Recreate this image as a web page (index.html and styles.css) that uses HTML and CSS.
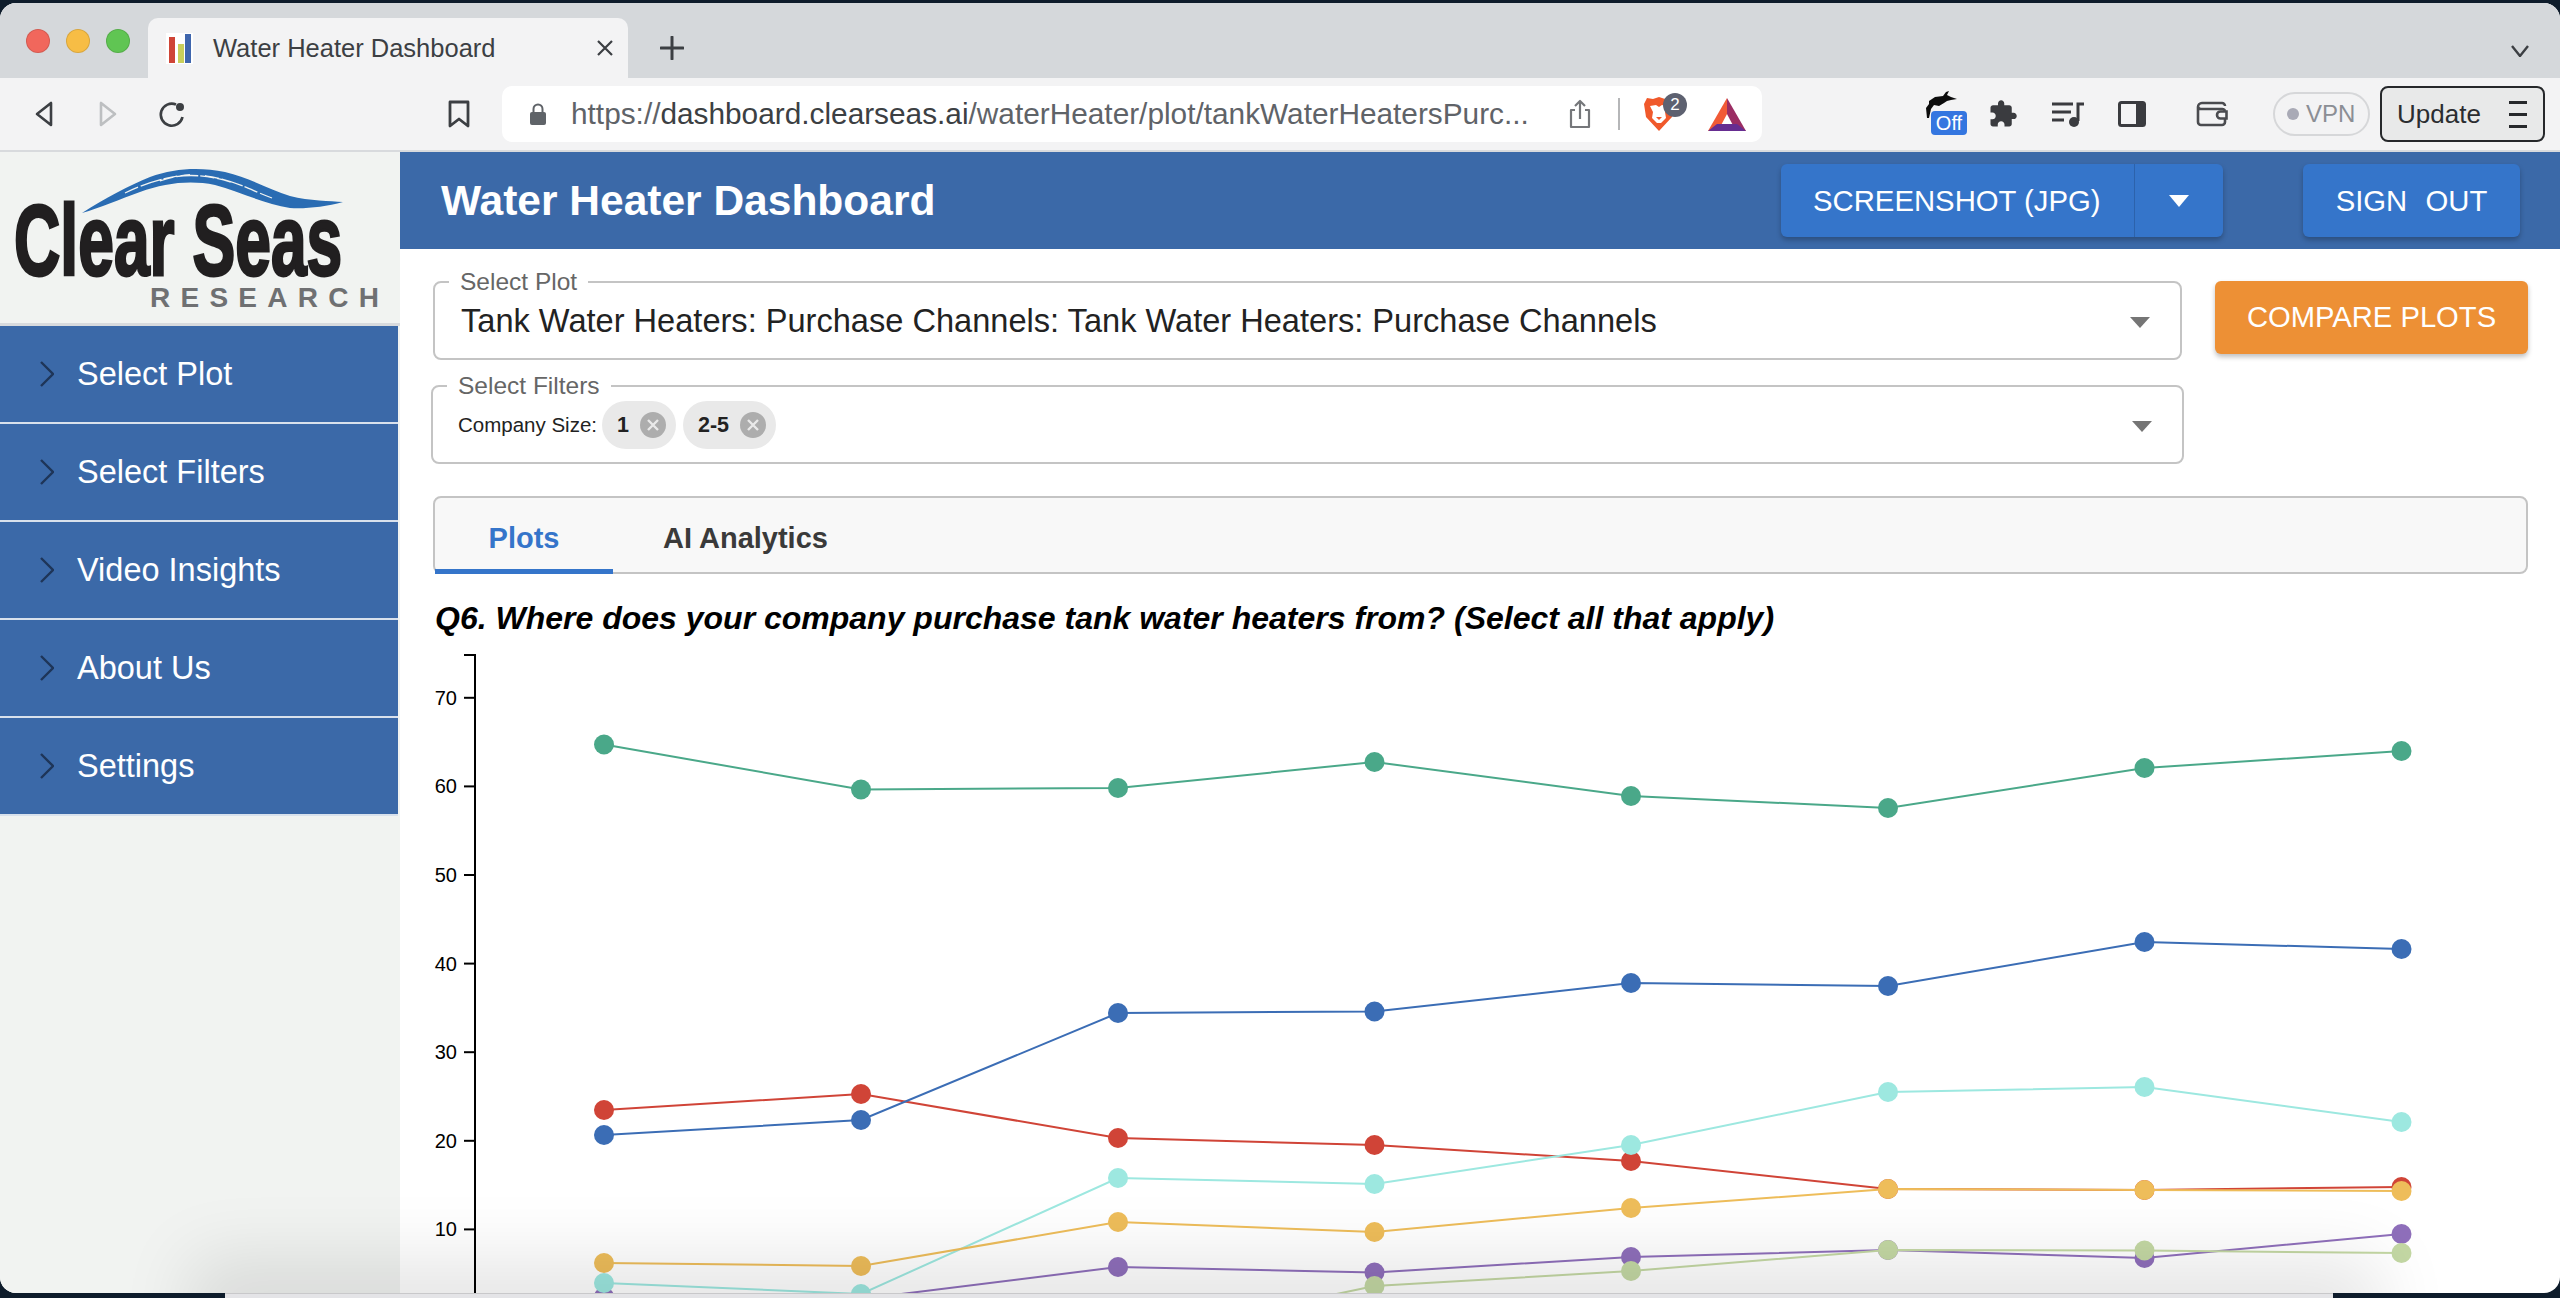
FILE: index.html
```html
<!DOCTYPE HTML>
<html>
<head>
<meta charset="utf-8">
<title>Water Heater Dashboard</title>
<link rel="stylesheet" href="styles.css">
</head>

<body>
<div class="window">
	<!-- browser tabs -->
	<div class="tabstrip">
		<div class="lights"><i class="red"></i><i class="yellow"></i><i class="green"></i></div>
		<div class="tab">
			<svg class="favicon" width="27" height="31" viewBox="0 0 27 31"><rect width="27" height="31" fill="#fff"/><rect x="3" y="4" width="6" height="26" fill="#cf4436"/><rect x="12" y="11" width="6" height="19" fill="#c9cf5a"/><rect x="19" y="1" width="6" height="29" fill="#3f66ad"/></svg>
			<span class="tab-title">Water Heater Dashboard</span>
			<svg class="tab-close" width="16" height="16" viewBox="0 0 16 16"><path d="M1 1l14 14M15 1L1 15" stroke="#3c3f43" stroke-width="2.2"/></svg>
		</div>
		<svg class="tab-plus" width="24" height="24" viewBox="0 0 24 24"><path d="M12 1v22M1 12h22" stroke="#3c3f43" stroke-width="3" stroke-linecap="round"/></svg>
		<svg class="tab-more" width="20" height="12" viewBox="0 0 20 12"><path d="M2 1l8 10 8-10" fill="none" stroke="#3c3f43" stroke-width="2.4"/></svg>
	</div>

	<!-- browser toolbar -->
	<div class="toolbar">
		<svg class="nav-back" width="20" height="26" viewBox="0 0 20 26"><path d="M17 2v22L3 13z" fill="none" stroke="#3c3f43" stroke-width="2.6" stroke-linejoin="round"/></svg>
		<svg class="nav-next" width="20" height="26" viewBox="0 0 20 26"><path d="M3 2v22l14-11z" fill="none" stroke="#bdbfc1" stroke-width="2.6" stroke-linejoin="round"/></svg>
		<svg class="nav-reload" width="28" height="28" viewBox="0 0 28 28"><path d="M18 4.500A11 11 0 1 0 24.500 17" fill="none" stroke="#3c3f43" stroke-width="2.6"/><circle cx="22" cy="7" r="4" fill="#3c3f43"/></svg>
		<svg class="nav-mark" width="22" height="28" viewBox="0 0 22 28"><path d="M2 2h18v24l-9-7-9 7z" fill="none" stroke="#3c3f43" stroke-width="2.8" stroke-linejoin="round"/></svg>
		<div class="urlbar">
			<svg class="lock" width="18" height="22" viewBox="0 0 18 22"><path d="M4.500 9V6a4.500 4.500 0 0 1 9 0v3" fill="none" stroke="#5f6368" stroke-width="2"/><rect x="1" y="9" width="16" height="13" rx="2" fill="#5f6368"/></svg>
			<span class="url">https://<b>dashboard.clearseas.ai</b>/waterHeater/plot/tankWaterHeatersPurc...</span>
			<svg class="share" width="22" height="30" viewBox="0 0 22 30"><path d="M6 11H2v17h18V11h-4M11 20V2M6 7l5-5 5 5" fill="none" stroke="#75777a" stroke-width="2.200" stroke-linejoin="round"/></svg>
			<i class="url-sep"></i>
			<div class="brave">
				<svg width="32" height="36" viewBox="0 0 32 36"><path d="M4 2l6 1 6-2 6 2 6-1 3 6-2 13-13 14L3 21 1 8z" fill="#f0592b"/><path d="M7 10l6-1 3 2 3-2 6 1-3 6 1 6-5 5h-4l-5-5 1-6z" fill="#fff"/><path d="M13 21h6l-3 3z" fill="#f0592b"/></svg>
				<span class="badge">2</span>
			</div>
			<svg class="bat" width="38" height="33" viewBox="0 0 38 33"><path d="M19 0L0 33h10l9-17z" fill="#f15a36"/><path d="M19 0l19 33H28l-9-17z" fill="#9b2d63"/><path d="M0 33l9-7h20l9 7z" fill="#662d91"/></svg>
		</div>
		<div class="ext-icons">
			<div class="ext-rabbit">
				<svg width="32" height="30" viewBox="0 0 32 30"><path d="M4 10l6-4 8-1 3-4 3-1-2 4 4 2 6 2-6 1-4 1-3 2-5 3-5-1-3 4-2 9H2l-1-10 3-4z" fill="#0c0c0c"/></svg>
				<span class="off">Off</span>
			</div>
			<svg width="30" height="30" viewBox="0 0 24 24"><path d="M20.500 11H19V7c0-1.100-.9-2-2-2h-4V3.500C13 2.120 11.880 1 10.500 1S8 2.120 8 3.500V5H4c-1.100 0-2 .9-2 2v3.800h1.500c1.490 0 2.700 1.210 2.700 2.700s-1.210 2.700-2.700 2.700H2V20c0 1.100.9 2 2 2h3.800v-1.500c0-1.490 1.210-2.700 2.700-2.700s2.700 1.210 2.700 2.700V22H17c1.100 0 2-.9 2-2v-4h1.500c1.380 0 2.500-1.120 2.500-2.500S21.880 11 20.500 11z" fill="#3a3b3f"/></svg>
			<svg width="32" height="25" viewBox="0 0 32 25"><path d="M0 2h21M0 10h19M0 18h12" stroke="#3a3b3f" stroke-width="3"/><path d="M26 19V2h6" fill="none" stroke="#3a3b3f" stroke-width="3"/><circle cx="22" cy="20" r="5" fill="#3a3b3f"/></svg>
			<svg width="28" height="26" viewBox="0 0 28 26"><rect x="1.500" y="1.500" width="25" height="23" rx="2" fill="none" stroke="#3a3b3f" stroke-width="3"/><rect x="18" y="1.500" width="9" height="23" fill="#3a3b3f"/></svg>
			<svg class="wallet" width="32" height="26" viewBox="0 0 32 26"><path d="M29 5a3 3 0 0 0-3-3H6a4 4 0 0 0-4 4v15a3 3 0 0 0 3 3h21a3 3 0 0 0 3-3v-3M2 6a3 3 0 0 0 3 2h21a3 3 0 0 1 3 2" fill="none" stroke="#4a4b4f" stroke-width="2.600"/><path d="M30.500 10.500h-6a3.500 3.500 0 0 0 0 7h6z" fill="none" stroke="#4a4b4f" stroke-width="2.600"/></svg>
		</div>
		<div class="vpn"><i></i>VPN</div>
		<div class="update">Update<span class="burger"><i></i><i></i><i></i></span></div>
	</div>

	<div class="app">
		<!-- sidebar -->
		<div class="sidebar">
			<div class="logo">
				<svg width="400" height="172" viewBox="0 152 400 172">
					<path d="M82 213C105 198 130 185 150 177C175 168 200 167 225 172C250 178 270 190 290 196C310 201 330 201 343 202C325 207 305 209 290 208C265 204 240 192 215 185C190 180 165 183 140 192C120 199 100 208 82 213z" fill="#2a6cb3"/>
					<path d="M125 193C150 181 170 176 190 175M205 176C235 180 250 190 272 198M160 181C180 173 205 174 230 182" fill="none" stroke="#f1f3f1" stroke-width="1.300" stroke-dasharray="14 3 22 2"/>
					<text class="logo-main" transform="translate(14 275) scale(.642 1)">Clear Seas</text>
					<text class="logo-sub" x="150" y="307" textLength="229" lengthAdjust="spacing">RESEARCH</text>
				</svg>
			</div>
			<ul class="menu">
				<li><svg width="14" height="26" viewBox="0 0 14 26"><path d="M1 1l12 12L1 25" fill="none" stroke="#1e3558" stroke-width="2.400"/></svg>Select Plot</li>
				<li><svg width="14" height="26" viewBox="0 0 14 26"><path d="M1 1l12 12L1 25" fill="none" stroke="#1e3558" stroke-width="2.400"/></svg>Select Filters</li>
				<li><svg width="14" height="26" viewBox="0 0 14 26"><path d="M1 1l12 12L1 25" fill="none" stroke="#1e3558" stroke-width="2.400"/></svg>Video Insights</li>
				<li><svg width="14" height="26" viewBox="0 0 14 26"><path d="M1 1l12 12L1 25" fill="none" stroke="#1e3558" stroke-width="2.400"/></svg>About Us</li>
				<li><svg width="14" height="26" viewBox="0 0 14 26"><path d="M1 1l12 12L1 25" fill="none" stroke="#1e3558" stroke-width="2.400"/></svg>Settings</li>
			</ul>
		</div>

		<div class="main">
			<div class="header">
				<h1>Water Heater Dashboard</h1>
				<div class="btn-group">
					<span class="btn-label">SCREENSHOT (JPG)</span>
					<span class="btn-arrow"><i class="caret-white"></i></span>
				</div>
				<div class="btn-signout">SIGN&nbsp; OUT</div>
			</div>

			<div class="content">
				<div class="controls">
					<div class="selects">
						<fieldset class="field">
							<legend>Select Plot</legend>
							<div class="field-value">Tank Water Heaters: Purchase Channels: Tank Water Heaters: Purchase Channels</div>
							<i class="caret"></i>
						</fieldset>
						<fieldset class="field field-filters">
							<legend>Select Filters</legend>
							<span class="chip-label">Company Size:</span>
							<span class="chip">1<svg width="26" height="26" viewBox="0 0 26 26"><circle cx="13" cy="13" r="13" fill="#adadad"/><path d="M8 8l10 10M18 8L8 18" stroke="#e9e9e9" stroke-width="2.400"/></svg></span>
							<span class="chip">2-5<svg width="26" height="26" viewBox="0 0 26 26"><circle cx="13" cy="13" r="13" fill="#adadad"/><path d="M8 8l10 10M18 8L8 18" stroke="#e9e9e9" stroke-width="2.400"/></svg></span>
							<i class="caret"></i>
						</fieldset>
					</div>
					<div class="btn-compare">COMPARE PLOTS</div>
				</div>

				<div class="tabs">
					<span class="tabs-item active">Plots</span>
					<span class="tabs-item">AI Analytics</span>
				</div>

				<h2 class="question">Q6. Where does your company purchase tank water heaters from? (Select all that apply)</h2>

				<svg id="chart" class="chart" width="2095" height="660" viewBox="433 640 2095 660"></svg>
			</div>
		</div>
	</div>
	<div class="dock-shadow"></div>
</div>
<div class="dock"></div>
<script src="chart.js"></script>
</body>
</html>
```

FILE: styles.css
```css
*{padding:0;margin:0;list-style:none;box-sizing:border-box}
html,body{height:1298px;overflow:hidden}
body{background:#0e1c2b;font-family:"Liberation Sans",Arial,sans-serif;padding-top:3px;position:relative}
i{font-style:normal;display:block}

.window{height:1290px;background:#fff;border-radius:16px;overflow:hidden;display:flex;flex-direction:column;position:relative}

/* browser chrome */
.tabstrip{height:75px;flex:none;background:#d5d8db;display:flex;align-items:flex-end;padding-left:26px;position:relative}
.lights{display:flex;gap:16px;align-self:flex-start;padding-top:26px;width:122px}
.lights i{width:24px;height:24px;border-radius:50%;border:1px solid rgba(0,0,0,.12)}
.lights .red{background:#f1675c}
.lights .yellow{background:#f7bd45}
.lights .green{background:#60c553}
.tab{width:480px;height:60px;background:#f3f3f4;border-radius:10px 10px 0 0;display:flex;align-items:center;padding:0 15px 0 18px}
.tab-title{font-size:25.5px;color:#3c3f43;margin-left:20px;flex:1}
.tab-plus{margin:0 0 18px 32px}
.tab-more{position:absolute;right:30px;top:42px}

.toolbar{height:72px;flex:none;background:#f3f3f4;border-bottom:0;display:flex;align-items:center}
.nav-back{margin-left:34px}
.nav-next{margin-left:44px}
.nav-reload{margin-left:40px}
.nav-mark{margin-left:262px}
.urlbar{width:1260px;height:56px;margin-left:32px;background:#fff;border-radius:10px;display:flex;align-items:center;padding-left:27px;flex:none}
.url{font-size:29.8px;color:#5f6368;margin-left:24px;width:988px;white-space:nowrap}
.url b{font-weight:normal;color:#3c4043}
.share{margin-left:10px}
.url-sep{width:2px;height:32px;background:#b5b6b8;margin-left:27px}
.brave{position:relative;margin-left:23px;width:32px;height:36px}
.brave svg{display:block}
.badge{position:absolute;left:20px;top:-3px;width:24px;height:24px;border-radius:50%;background:#5d6170;color:#fff;font-size:17px;line-height:24px;text-align:center}
.bat{margin-left:33px}

.ext-icons{display:flex;align-items:center;margin-left:163px;gap:34px;width:303px;flex:none}
.ext-rabbit{position:relative;width:29px;height:40px;margin-bottom:6px}
.ext-rabbit svg{display:block}
.off{position:absolute;left:6px;top:20px;width:36px;height:24px;background:#3476e0;border-radius:4px;color:#fff;font-size:20px;line-height:24px;text-align:center}
.wallet{margin-left:16px}
.vpn{margin-left:45px;width:97px;height:44px;border:2px solid #d6d7d9;border-radius:22px;display:flex;align-items:center;font-size:24px;color:#8b8e94;padding-left:12px;flex:none}
.vpn i{width:12px;height:12px;border-radius:50%;background:#a9aab6;margin-right:7px}
.update{margin-left:10px;width:165px;height:56px;border:2px solid #26282b;border-radius:8px;background:#e8e9e9;display:flex;align-items:center;justify-content:space-between;padding:0 16px 0 15px;font-size:26px;color:#2b2d30;flex:none}
.burger{display:flex;flex-direction:column;gap:9px;width:18px}
.burger i{height:3px;background:#26282b}

/* app */
.app{flex:1;display:flex;min-height:0;border-top:2px solid #d8dadd}
.sidebar{width:400px;flex:none;background:#f1f3f1}
.logo{height:174px;border-bottom:3px solid #d8dadd}
.logo svg{display:block}
.logo-main{font-family:"Liberation Sans",sans-serif;font-weight:bold;font-size:100px;fill:#211f20;stroke:#211f20;stroke-width:3}
.logo-sub{font-family:"Liberation Sans",sans-serif;font-weight:bold;font-size:28px;fill:#6f7072}
.menu{width:398px}
.menu li{height:98px;background:#3b69a8;border-bottom:2px solid #d8e1ec;color:#fff;font-size:32.5px;display:flex;align-items:center;padding-left:40px}
.menu li svg{margin-right:23px}

.main{flex:1;min-width:0;display:flex;flex-direction:column}
.header{height:97px;flex:none;background:#3b69a8;display:flex;align-items:center;padding:0 40px 0 41px}
.header h1{font-size:42.5px;color:#fff;font-weight:bold;flex:1}
.btn-group{width:442px;height:73px;background:#3575ca;border-radius:6px;display:flex;box-shadow:0 3px 5px rgba(0,0,0,.25);color:#fff;font-size:29.3px;margin-right:80px}
.btn-label{width:354px;line-height:73px;padding-left:32px;border-right:1px solid #2c62ab}
.btn-arrow{flex:1;display:flex;align-items:center;justify-content:center}
.caret-white{border:10px solid transparent;border-top:12px solid #fff;border-bottom:0}
.btn-signout{width:217px;height:73px;background:#3575ca;border-radius:6px;box-shadow:0 3px 5px rgba(0,0,0,.25);color:#fff;font-size:29.3px;line-height:73px;text-align:center;word-spacing:1px}

.content{flex:1;min-height:0;padding:19px 32px 0 33px}
.controls{display:flex;gap:33px}
.selects{width:1749px;flex:none}
.btn-compare{width:313px;height:73px;margin-top:13px;background:#ed9035;border-radius:6px;box-shadow:0 3px 5px rgba(0,0,0,.25);color:#fff;font-size:29.2px;line-height:73px;text-align:center}

.field{border:2px solid #c4c4c4;border-radius:8px;height:92px;padding:0 26px;display:flex;align-items:center;position:relative}
.field legend{margin-left:-12px;padding:0 11px;font-size:24.5px;line-height:28px;color:#666}
.field-value{font-size:32.6px;color:#222;margin-bottom:12px}
.field-filters{margin:12px -2px 0;padding:0 24px 0 25px}
.field-filters legend{margin-left:-11px}
.caret{position:absolute;right:30px;top:21px;border:10px solid transparent;border-top:11px solid #757575;border-bottom:0}
.chip-label{font-size:20.5px;color:#222;margin:0 5px 12px 0}
.chip{height:48px;margin:0 7px 12px 0;padding:0 10px 0 15px;border-radius:24px;background:#e9e9e9;display:flex;align-items:center;gap:11px;font-size:21.5px;font-weight:bold;color:#222}

.tabs{height:78px;margin-top:32px;border:2px solid #c4c4c4;border-radius:8px;background:#f8f8f8;display:flex;align-items:stretch;font-weight:bold;font-size:29px;color:#3a3a3a}
.tabs-item{line-height:80px;padding:0 48px 0 54px}
.tabs-item.active{width:178px;padding:0;text-align:center;color:#3575ca;border-bottom:5px solid #3575ca;margin-bottom:-2px}
.tabs-item+.tabs-item{padding-left:50px}

.question{margin:25px 0 0 2px;font-size:32px;line-height:38px;font-weight:bold;font-style:italic;color:#000}
.chart{display:block;margin-top:3px;overflow:hidden}
.chart text{font-family:"Liberation Sans",sans-serif;font-size:20px;fill:#000}

/* dock behind the window, its shadow falls on the page */
.dock-shadow{position:absolute;left:225px;bottom:-30px;width:2120px;height:30px;box-shadow:0 0 70px 35px rgba(0,0,0,.1)}
.dock{position:absolute;left:225px;bottom:0;width:2108px;height:5px;background:#e4e4e7;border-top:1px solid #c8c8ca}
```

FILE: chart.js
```js
window.onload=function(){
	var oChart=document.getElementById('chart');
	var NS='http://www.w3.org/2000/svg';
	var xs=[604,861,1118,1374.5,1631,1888,2144.5,2401.5];
	//page y of each point, the order is the draw order
	var series=[
		{c:'#4aa889',y:[744.5,789.5,788,762,796,808,768,751]},
		{c:'#d04437',y:[1110,1094,1138,1145,1161,1189,1190,1187]},
		{c:'#3b6db5',y:[1135,1120,1013,1011.5,983,986,942,949]},
		{c:'#8f6fbb',y:[1297,1299,1267,1272.5,1257,1250,1258,1234]},
		{c:'#9de8e0',y:[1283,1294,1178,1184,1145,1092,1087,1122]},
		{c:'#eebd5a',y:[1263,1266,1222,1232,1208,1189,1190,1191]},
		{c:'#c4d8a4',y:[1400,1390,1340,1286,1271,1250,1250.5,1253]}
	];

	function add(tag,attrs,text){
		var o=document.createElementNS(NS,tag);
		for(var k in attrs){
			o.setAttribute(k,attrs[k]);
		}
		if(text){
			o.textContent=text;
		}
		oChart.appendChild(o);
		return o;
	}

	//y axis
	add('path',{d:'M464 655H475V1300',fill:'none',stroke:'#000','stroke-width':2});
	for(var v=10;v<=70;v+=10){
		var y=1318-8.86*v;
		add('path',{d:'M464 '+y+'H475',stroke:'#000','stroke-width':2});
		add('text',{x:457,y:y+7,'text-anchor':'end'},String(v));
	}

	//lines and dots
	for(var i=0;i<series.length;i++){
		var s=series[i];
		var pts=[];
		for(var j=0;j<xs.length;j++){
			pts.push(xs[j]+','+s.y[j]);
		}
		add('polyline',{points:pts.join(' '),fill:'none',stroke:s.c,'stroke-width':2});
		for(var j=0;j<xs.length;j++){
			add('circle',{cx:xs[j],cy:s.y[j],r:10,fill:s.c});
		}
	}
};
```
